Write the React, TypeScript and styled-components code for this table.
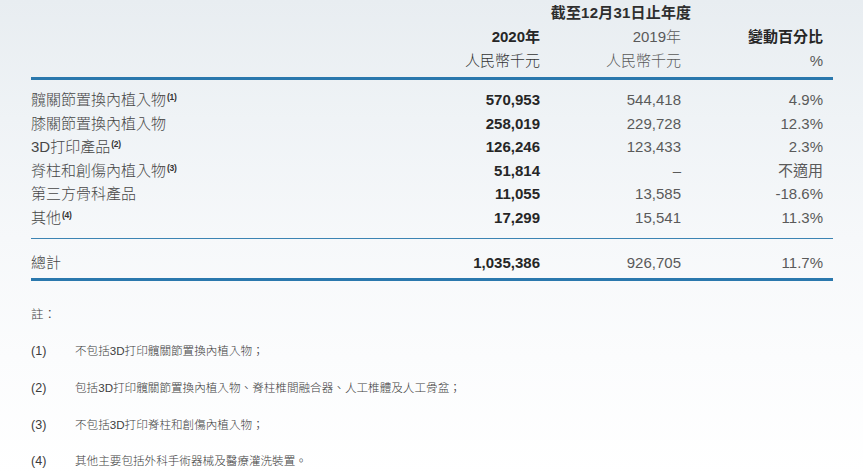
import React from 'react';
import styled, { createGlobalStyle } from 'styled-components';

const GlobalStyle = createGlobalStyle`
  html, body {
    margin: 0;
    padding: 0;
  }
  body {
    width: 863px;
    height: 475px;
    overflow: hidden;
    font-family: "Liberation Sans", "Noto Sans CJK TC", sans-serif;
    background: linear-gradient(180deg, #e8edf1 0%, #eff3f6 25%, #f6f8fa 50%, #fbfcfd 75%, #ffffff 100%);
    color: #3c3c3c;
  }
`;

const Page = styled.div`
  padding: 1px 30px 0 31px;
  width: 802px;
`;

const Grid = styled.div`
  display: grid;
  grid-template-columns: 1fr 140px 141px 142px;
  padding-right: 10px;
`;

const HeadRow = styled(Grid)`
  line-height: 24px;
  font-size: 15px;
`;

const PeriodTitle = styled.div`
  grid-column: 2 / 5;
  text-align: center;
  padding-left: 19px;
  font-weight: 600;
  color: #2e2e2e;
  letter-spacing: 0.2px;

  b {
    font-weight: 700;
  }
`;

const HeadCell = styled.div<{ $strong?: boolean; $col: number; $tone?: string }>`
  grid-column: ${({ $col }) => $col};
  text-align: right;
  font-weight: ${({ $strong }) => ($strong ? 700 : 300)};
  color: ${({ $strong, $tone }) => $tone ?? ($strong ? '#262626' : '#595959')};
`;

const Rule = styled.div<{ $thick?: boolean }>`
  height: ${({ $thick }) => ($thick ? '3px' : '1px')};
  background: ${({ $thick }) => ($thick ? '#2a78ad' : '#3c84b3')};
`;

const Body = styled.div<{ $top: number; $bottom: number }>`
  padding-top: ${({ $top }) => $top}px;
  padding-bottom: ${({ $bottom }) => $bottom}px;
`;

const DataRow = styled(Grid)<{ $h?: number }>`
  line-height: ${({ $h }) => $h ?? 23.5}px;
  font-size: 15px;
`;

const Label = styled.div`
  color: #474747;
  font-weight: 300;
  white-space: nowrap;

  sup {
    font-size: 8.5px;
    font-weight: 700;
    vertical-align: 5px;
    line-height: 0;
    margin-left: 1px;
    letter-spacing: -0.3px;
    color: #333;
  }
`;

const Num = styled.div<{ $bold?: boolean }>`
  text-align: right;
  font-weight: ${({ $bold }) => ($bold ? 700 : 400)};
  color: ${({ $bold }) => ($bold ? '#262626' : '#5a5a5a')};
`;

const Notes = styled.div`
  padding-top: 15.7px;
  font-size: 11.6px;
  font-weight: 300;
  color: #404040;
`;

const NoteTitle = styled.div`
  line-height: 36.67px;
  font-size: 12.5px;
`;

const NoteRow = styled.div`
  display: grid;
  grid-template-columns: 44px 1fr;
  line-height: 36.67px;
`;

const NoteNo = styled.span`
  font-size: 12.5px;
  color: #3a3a3a;
`;

type Row = {
  label: string;
  note?: string;
  y2020: string;
  y2019: string;
  change: string;
};

const rows: Row[] = [
  { label: '髖關節置換內植入物', note: '(1)', y2020: '570,953', y2019: '544,418', change: '4.9%' },
  { label: '膝關節置換內植入物', y2020: '258,019', y2019: '229,728', change: '12.3%' },
  { label: '3D打印產品', note: '(2)', y2020: '126,246', y2019: '123,433', change: '2.3%' },
  { label: '脊柱和創傷內植入物', note: '(3)', y2020: '51,814', y2019: '–', change: '不適用' },
  { label: '第三方骨科產品', y2020: '11,055', y2019: '13,585', change: '-18.6%' },
  { label: '其他', note: '(4)', y2020: '17,299', y2019: '15,541', change: '11.3%' },
];

const notes = [
  '不包括3D打印髖關節置換內植入物；',
  '包括3D打印髖關節置換內植入物、脊柱椎間融合器、人工椎體及人工骨盆；',
  '不包括3D打印脊柱和創傷內植入物；',
  '其他主要包括外科手術器械及醫療灌洗裝置。',
];

export default function App() {
  return (
    <>
      <GlobalStyle />
      <Page>
        <HeadRow>
          <PeriodTitle>
            截至<b>12</b>月<b>31</b>日止年度
          </PeriodTitle>
          <HeadCell $col={2} $strong>
            2020年
          </HeadCell>
          <HeadCell $col={3}>2019年</HeadCell>
          <HeadCell $col={4} $strong>
            變動百分比
          </HeadCell>
          <HeadCell $col={2} $tone="#333">
            人民幣千元
          </HeadCell>
          <HeadCell $col={3}>人民幣千元</HeadCell>
          <HeadCell $col={4}>%</HeadCell>
        </HeadRow>
        <Body $top={4} $bottom={0}>
          <Rule $thick />
        </Body>

        <Body $top={8} $bottom={9}>
          {rows.map((r) => (
            <DataRow key={r.label}>
              <Label>
                {r.label}
                {r.note && <sup>{r.note}</sup>}
              </Label>
              <Num $bold>{r.y2020}</Num>
              <Num>{r.y2019}</Num>
              <Num>{r.change}</Num>
            </DataRow>
          ))}
        </Body>
        <Rule />

        <Body $top={12} $bottom={4}>
          <DataRow $h={23}>
            <Label>總計</Label>
            <Num $bold>1,035,386</Num>
            <Num>926,705</Num>
            <Num>11.7%</Num>
          </DataRow>
        </Body>
        <Rule $thick />

        <Notes>
          <NoteTitle>註：</NoteTitle>
          {notes.map((n, i) => (
            <NoteRow key={i}>
              <NoteNo>({i + 1})</NoteNo>
              <span>{n}</span>
            </NoteRow>
          ))}
        </Notes>
      </Page>
    </>
  );
}
